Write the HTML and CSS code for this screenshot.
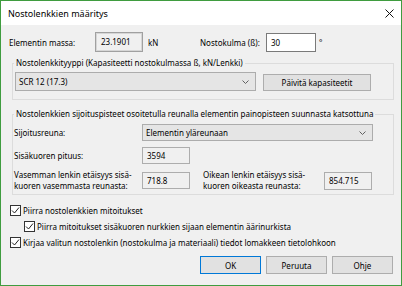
FILE: index.html
```html
<!DOCTYPE html>
<html lang="fi">
<head>
  <meta charset="UTF-8" />
  <title>Nostolenkkien määritys</title>
  <link rel="stylesheet" href="styles.css">
</head>
<body>
  <div class="window">
    <div class="titlebar">
      <span class="title">Nostolenkkien määritys</span>
      <svg class="close" width="9" height="9" viewBox="0 0 9 9">
        <path d="M0.5 0.5L8.5 8.5M8.5 0.5L0.5 8.5" stroke="#111" stroke-width="1" fill="none"/>
      </svg>
    </div>

    <div class="content">
      <div class="row top-row">
        <span class="lbl mass-lbl">Elementin massa:</span>
        <span class="field ro mass">23.1901</span>
        <span class="unit">kN</span>
        <span class="lbl angle-lbl">Nostokulma (ß):</span>
        <span class="field edit angle">30</span>
        <span class="deg">°</span>
      </div>

      <fieldset class="group type-group">
        <legend>Nostolenkkityyppi (Kapasiteetti nostokulmassa ß, kN/Lenkki)</legend>
        <div class="row type-row">
          <div class="combo type-combo">
            <span class="combo-text">SCR 12 (17.3)</span>
            <svg class="chevron" width="7" height="4" viewBox="0 0 7 4"><path d="M0.5 0.5L3.5 3.5L6.5 0.5" stroke="#606060" fill="none"/></svg>
          </div>
          <button class="btn update-btn">Päivitä kapasiteetit</button>
        </div>
      </fieldset>

      <fieldset class="group place-group">
        <legend>Nostolenkkien sijoituspisteet osoitetulla reunalla elementin painopisteen suunnasta katsottuna</legend>
        <div class="row">
          <span class="lbl side-lbl">Sijoitusreuna:</span>
          <div class="combo side-combo">
            <span class="combo-text">Elementin yläreunaan</span>
            <svg class="chevron" width="7" height="4" viewBox="0 0 7 4"><path d="M0.5 0.5L3.5 3.5L6.5 0.5" stroke="#606060" fill="none"/></svg>
          </div>
        </div>
        <div class="row length-row">
          <span class="lbl side-lbl">Sisäkuoren pituus:</span>
          <span class="field ro small">3594</span>
        </div>
        <div class="row dist-row">
          <span class="lbl side-lbl two-line">Vasemman lenkin etäisyys sisä-<br>kuoren vasemmasta reunasta:</span>
          <span class="field ro small">718.8</span>
          <span class="lbl right-lbl two-line">Oikean lenkin etäisyys sisä-<br>kuoren oikeasta reunasta:</span>
          <span class="field ro small right-box">854.715</span>
        </div>
      </fieldset>

      <div class="checks">
        <label class="check">
          <span class="box"><svg width="9" height="9" viewBox="0 0 9 9"><path d="M1 4.5L3.5 7L8 1.5" stroke="#222" stroke-width="1" fill="none"/></svg></span>
          Piirra nostolenkkien mitoitukset
        </label>
        <label class="check sub">
          <span class="box"><svg width="9" height="9" viewBox="0 0 9 9"><path d="M1 4.5L3.5 7L8 1.5" stroke="#222" stroke-width="1" fill="none"/></svg></span>
          Piirra mitoitukset sisäkuoren nurkkien sijaan elementin äärinurkista
        </label>
        <label class="check">
          <span class="box"><svg width="9" height="9" viewBox="0 0 9 9"><path d="M1 4.5L3.5 7L8 1.5" stroke="#222" stroke-width="1" fill="none"/></svg></span>
          Kirjaa valitun nostolenkin (nostokulma ja materiaali) tiedot lomakkeen tietolohkoon
        </label>
      </div>

      <div class="actions">
        <button class="btn action default">OK</button>
        <button class="btn action">Peruuta</button>
        <button class="btn action">Ohje</button>
      </div>
    </div>
  </div>
</body>
</html>
```

FILE: styles.css
```css
* {
  box-sizing: border-box;
}
body {
  margin: 0;
  font-family: "Noto Sans", "Open Sans", sans-serif;
  font-size: 8px;
  line-height: 11px;
  color: #000;
  background: #fff;
}
.window {
  width: 402px;
  height: 286px;
  border: 1px solid #3f9c3f;
  background: #f0f0f0;
  display: flex;
  flex-direction: column;
}
.titlebar {
  height: 24px;
  flex: none;
  background: #fff;
  display: flex;
  align-items: center;
  justify-content: space-between;
  padding: 0 7px 0 7px;
}
.title {
  font-size: 9px;
}
.content {
  padding: 7px 8px 0;
  display: flex;
  flex-direction: column;
}
.row {
  display: flex;
  align-items: center;
}
.top-row {
  height: 20px;
}
.mass-lbl {
  width: 86px;
}
.field {
  height: 17px;
  line-height: 15px;
  border: 1px solid #adadad;
  padding: 0 4px;
  white-space: nowrap;
}
.field.ro {
  background: #f0f0f0;
}
.field.mass {
  width: 48px;
  height: 20px;
  line-height: 18px;
  border-color: #a0a0a0;
  box-shadow: inset 0 0 0 1px #d6d6d6;
  padding-left: 5px;
}
.field.edit {
  background: #fff;
  border-color: #7a7a7a;
}
.field.angle {
  width: 50px;
  height: 19px;
  line-height: 17px;
}
.unit {
  margin-left: 5px;
  width: 52px;
}
.angle-lbl {
  width: 66px;
}
.deg {
  margin-left: 3px;
}

/* group boxes */
.group {
  margin: 0 0 0 3px;
  width: 382px;
  border: 1px solid #dcdcdc;
  padding: 3px 2px 8px 1px;
  min-width: 0;
}
.group legend {
  padding: 0 2px;
  line-height: 12px;
}
.type-group {
  margin-top: 5px;
}
.type-row {
  align-items: flex-end;
}
.combo {
  height: 19px;
  background: #e5e5e5;
  border: 1px solid #acacac;
  display: flex;
  align-items: center;
  justify-content: flex-start;
  padding: 0 4px 0 3px;
}
.combo-text {
  flex: 1;
  text-align: left;
}
.type-combo {
  width: 241px;
  margin-left: 1px;
}
.chevron {
  flex: none;
  margin-right: 2px;
}
.btn {
  font: inherit;
  color: #000;
  background: #e1e1e1;
  border: 1px solid #adadad;
  padding: 0;
  height: 17px;
}
.update-btn {
  width: 108px;
  margin-left: 7px;
}
.place-group {
  margin-top: 8px;
  padding: 4px 2px 3px 1px;
}
.side-lbl {
  width: 128px;
  flex: none;
}
.side-combo {
  width: 231px;
  height: 17px;
}
.length-row {
  margin-top: 6px;
}
.field.small {
  width: 48px;
}
.dist-row {
  margin-top: 5px;
  height: 22px;
}
.right-lbl {
  margin-left: 13px;
  width: 121px;
}
.field.right-box {
  height: 18px;
  margin-top: 2px;
}

/* checkboxes */
.checks {
  margin-top: 7px;
  display: flex;
  flex-direction: column;
}
.check {
  height: 16px;
  display: flex;
  align-items: center;
  white-space: nowrap;
}
.check.sub {
  padding-left: 14px;
}
.box {
  width: 11px;
  height: 11px;
  margin: 0 2px 0 1px;
  background: #fff;
  border: 1px solid #333;
  display: flex;
  align-items: center;
  justify-content: center;
}

/* dialog buttons */
.actions {
  margin-top: 6px;
  display: flex;
  justify-content: flex-end;
  gap: 5px;
}
.action {
  width: 61px;
  height: 18px;
}
.action.default {
  border-color: #0078d7;
}
```
